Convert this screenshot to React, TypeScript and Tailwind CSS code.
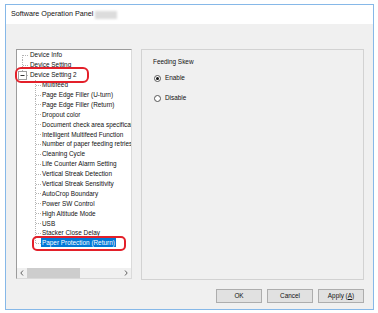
import React from 'react';

const FONT = "font-['Liberation_Sans',Arial,sans-serif]";

const children = [
  'Multifeed',
  'Page Edge Filler (U-turn)',
  'Page Edge Filler (Return)',
  'Dropout color',
  'Document check area specification',
  'Intelligent Multifeed Function',
  'Number of paper feeding retries',
  'Cleaning Cycle',
  'Life Counter Alarm Setting',
  'Vertical Streak Detection',
  'Vertical Streak Sensitivity',
  'AutoCrop Boundary',
  'Power SW Control',
  'High Altitude Mode',
  'USB',
  'Stacker Close Delay',
  'Paper Protection (Return)',
];

const LINE = '#b4b4b4';

// tree connector for top level rows
function RootLines({ first, last, box }: { first?: boolean; last?: boolean; box?: boolean }) {
  return (
    <svg width={13} height={10} className="shrink-0 overflow-visible">
      <line x1={5.5} y1={first ? 5 : 0} x2={5.5} y2={last ? 5 : 10} stroke={LINE} strokeDasharray="1 1" />
      <line x1={6} y1={5.5} x2={12} y2={5.5} stroke={LINE} strokeDasharray="1 1" />
      {box && (
        <>
          <rect x={1.5} y={1.5} width={8} height={8} fill="white" stroke="#a0a0a0" />
          <line x1={3.5} y1={5.5} x2={7.5} y2={5.5} stroke="#333" />
        </>
      )}
    </svg>
  );
}

// tree connector for child rows
function ChildLines({ last }: { last?: boolean }) {
  return (
    <svg width={25} height={10} className="shrink-0 overflow-visible">
      <line x1={18.5} y1={0} x2={18.5} y2={last ? 5 : 10} stroke={LINE} strokeDasharray="1 1" />
      <line x1={19} y1={5.5} x2={24} y2={5.5} stroke={LINE} strokeDasharray="1 1" />
    </svg>
  );
}

function Row({ lines, label, selected }: { lines: React.ReactNode; label: string; selected?: boolean }) {
  return (
    <div className="flex h-[9.9px] items-center whitespace-nowrap">
      {lines}
      <span
        className={`ml-[-1px] px-[1px] leading-[9px] ${selected ? 'bg-[#0078d7] text-white' : 'text-[#111]'}`}
      >
        {label}
      </span>
    </div>
  );
}

function Radio({ checked, label }: { checked?: boolean; label: string }) {
  return (
    <div className="flex h-[10px] items-center">
      <span className="ml-[1px] flex h-[7px] w-[7px] items-center justify-center rounded-full border border-[#555] bg-white">
        {checked && <span className="h-[3px] w-[3px] rounded-full bg-[#111]" />}
      </span>
      <span className="ml-[4px] text-[#111]">{label}</span>
    </div>
  );
}

function Button({ children }: { children: React.ReactNode }) {
  return (
    <div className="flex h-[14px] w-[46px] items-center justify-center border border-[#adadad] bg-[#e1e1e1] text-[#111]">
      {children}
    </div>
  );
}

export default function App() {
  return (
    <div className={`min-h-[313px] w-[378px] bg-white pl-[5px] pt-[4px] text-[6.4px] ${FONT}`}>
      <div className="flex h-[306px] w-[369px] flex-col border border-[#86b8e8] bg-[#f0f0f0]">
        {/* title bar */}
        <div className="flex h-[19px] items-center bg-white pl-[5px]">
          <span className="text-[7.2px] text-[#111]">Software Operation Panel</span>
          <span className="ml-[2px] h-[8px] w-[22px] bg-[#dcdcdc] blur-[1px]" />
        </div>

        <div className="flex flex-1 flex-col pl-[10px] pr-[9px] pt-[25px]">
          <div className="flex gap-[9px]">
            {/* tree */}
            <div className="relative h-[230px] w-[116px] shrink-0">
              <div className="flex h-full w-full flex-col overflow-hidden border border-[#9c9c9c] border-r-[#dadada] border-b-[#dadada] bg-white">
                <div className="flex-1 overflow-hidden">
                  <Row lines={<RootLines first />} label="Device Info" />
                  <Row lines={<RootLines />} label="Device Setting" />
                  <Row lines={<RootLines last box />} label="Device Setting 2" />
                  {children.map((c, i) => (
                    <Row
                      key={c}
                      lines={<ChildLines last={i === children.length - 1} />}
                      label={c}
                      selected={i === children.length - 1}
                    />
                  ))}
                </div>
                {/* horizontal scroll bar */}
                <div className="flex h-[10px] items-center bg-[#f0f0f0]">
                  <div className="flex h-full w-[10px] items-center justify-center">
                    <svg width={4} height={6}>
                      <path d="M3 0.5 L0.8 3 L3 5.5" fill="none" stroke="#606060" />
                    </svg>
                  </div>
                  <div className="h-full w-[53px] bg-[#cdcdcd]" />
                  <div className="flex-1" />
                  <div className="flex h-full w-[10px] items-center justify-center">
                    <svg width={4} height={6}>
                      <path d="M1 0.5 L3.2 3 L1 5.5" fill="none" stroke="#606060" />
                    </svg>
                  </div>
                </div>
              </div>
              {/* red highlight marks */}
              <div className="absolute left-[-1px] top-[18px] h-[16px] w-[74px] rounded-[6px] border-2 border-[#e3202a]" />
              <div className="absolute left-[16px] top-[187px] h-[15px] w-[94px] rounded-[5px] border-2 border-[#e3202a]" />
            </div>

            {/* settings group */}
            <div className="flex h-[231px] w-[223px] flex-col border border-[#d2d2d2] pl-[11px] pt-[7px]">
              <div className="h-[10px] leading-[10px] text-[#111]">Feeding Skew</div>
              <div className="mt-[6px]">
                <Radio checked label="Enable" />
              </div>
              <div className="mt-[10px]">
                <Radio label="Disable" />
              </div>
            </div>
          </div>

          <div className="mt-[9px] flex justify-end gap-[5px]">
            <Button>OK</Button>
            <Button>Cancel</Button>
            <Button>
              Apply (<span className="underline">A</span>)
            </Button>
          </div>
        </div>
      </div>
    </div>
  );
}
